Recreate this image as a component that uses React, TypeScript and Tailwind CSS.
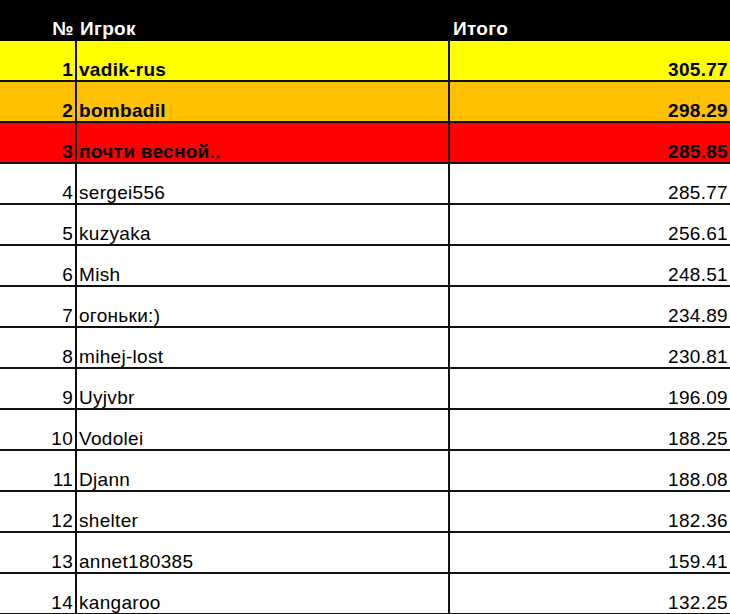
import React from 'react';

type Row = { rank: number; name: string; total: string };

const rows: Row[] = [
  { rank: 1, name: 'vadik-rus', total: '305.77' },
  { rank: 2, name: 'bombadil', total: '298.29' },
  { rank: 3, name: 'почти весной..', total: '285.85' },
  { rank: 4, name: 'sergei556', total: '285.77' },
  { rank: 5, name: 'kuzyaka', total: '256.61' },
  { rank: 6, name: 'Mish', total: '248.51' },
  { rank: 7, name: 'огоньки:)', total: '234.89' },
  { rank: 8, name: 'mihej-lost', total: '230.81' },
  { rank: 9, name: 'Uyjvbr', total: '196.09' },
  { rank: 10, name: 'Vodolei', total: '188.25' },
  { rank: 11, name: 'Djann', total: '188.08' },
  { rank: 12, name: 'shelter', total: '182.36' },
  { rank: 13, name: 'annet180385', total: '159.41' },
  { rank: 14, name: 'kangaroo', total: '132.25' },
];

// podium colours, everything else is plain white
const rowBg = (rank: number) => {
  if (rank === 1) return 'bg-[#ffff00] font-bold';
  if (rank === 2) return 'bg-[#ffc000] font-bold';
  if (rank === 3) return 'bg-[#ff0000] font-bold';
  return 'bg-white';
};

export default function App() {
  return (
    <div
      className="w-[730px] h-[614px] overflow-hidden bg-white text-black text-[19px] leading-[19px] tracking-[0.3px]"
      style={{ fontFamily: '"Liberation Sans", Arial, sans-serif' }}
    >
      {/* Header */}
      <div className="flex h-[41px] bg-black text-white font-bold">
        <div className="w-[77px] flex items-end justify-end pr-[3px] pb-[3px]">№</div>
        <div className="w-[373px] flex items-end pl-[3px] pb-[3px]">Игрок</div>
        <div className="flex-1 flex items-end pl-[3px] pb-[3px]">Итого</div>
      </div>

      {rows.map((r) => (
        <div key={r.rank} className={`flex h-[41px] border-b-2 border-[#111] ${rowBg(r.rank)}`}>
          <div className="w-[77px] border-r-2 border-[#111] flex items-end justify-end pr-[2px] pb-[1px]">
            {r.rank}
          </div>
          <div className="w-[373px] border-r-2 border-[#111] flex items-end pl-[2px] pb-[1px]">
            {r.name}
          </div>
          <div className="flex-1 flex items-end justify-end pr-[2px] pb-[1px]">{r.total}</div>
        </div>
      ))}
    </div>
  );
}
